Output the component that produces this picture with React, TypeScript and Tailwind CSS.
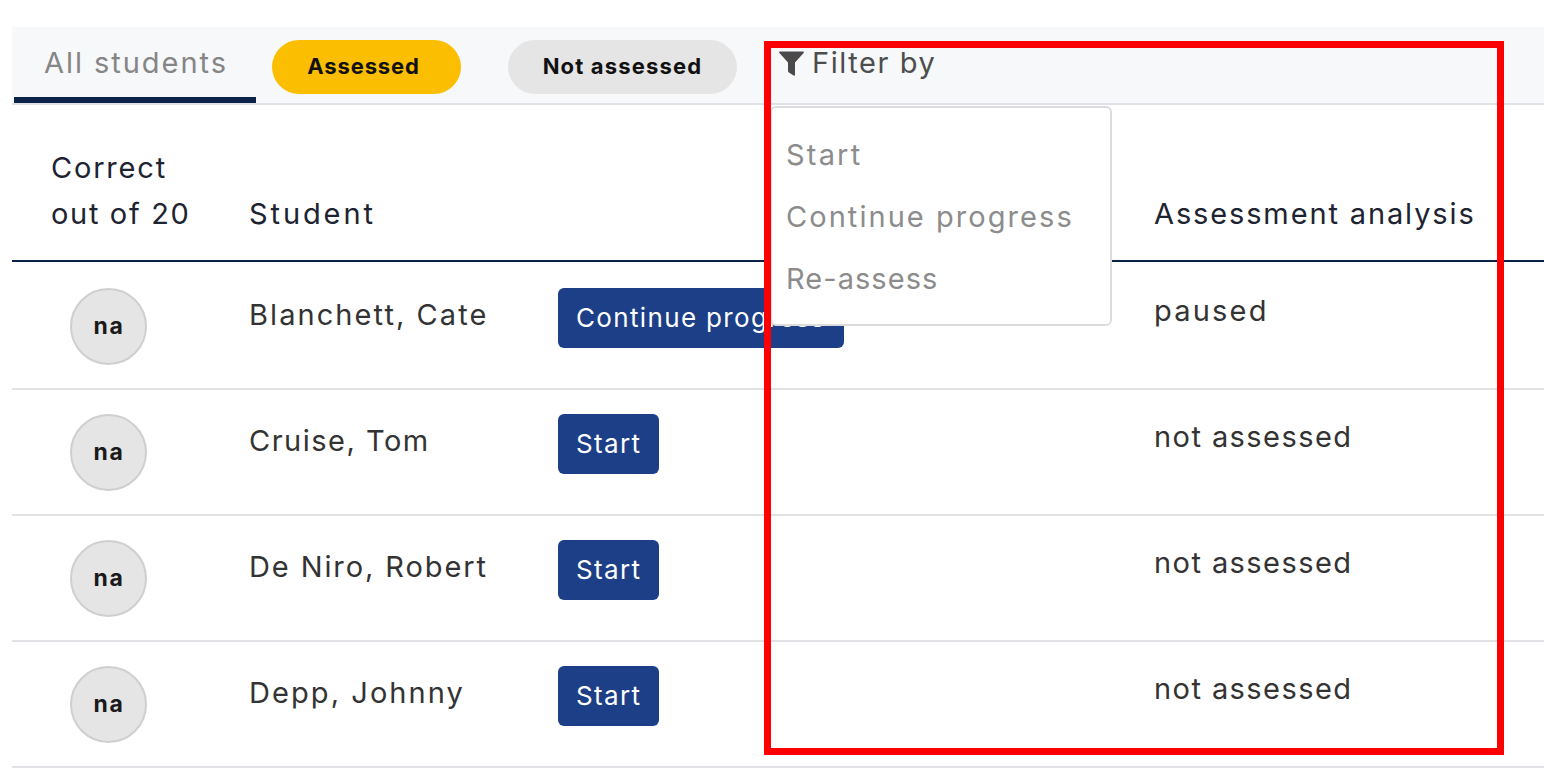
import React from "react";

const rows = [
  { name: "Blanchett, Cate", nameTrack: "tracking-[2.07px]", action: "Continue progress", status: "paused", statusTrack: "tracking-[2.2px]" },
  { name: "Cruise, Tom", nameTrack: "tracking-[1.5px]", action: "Start", status: "not assessed", statusTrack: "tracking-[1.43px]" },
  { name: "De Niro, Robert", nameTrack: "tracking-[1.9px]", action: "Start", status: "not assessed", statusTrack: "tracking-[1.43px]" },
  { name: "Depp, Johnny", nameTrack: "tracking-[2.07px]", action: "Start", status: "not assessed", statusTrack: "tracking-[1.43px]" },
];

function Funnel() {
  return (
    <svg width="25" height="25" viewBox="0 0 25 25" className="shrink-0">
      <path d="M0.6 0.5H24.4C24.9 0.5 25 1.5 24.6 2L16 11.6V24C16 24.8 15.2 25 14.6 24.6L9.9 21.4C9.3 21 9 20.5 9 20V11.6L0.4 2C0 1.5 0.1 0.5 0.6 0.5Z" fill="#4a4a4a" />
    </svg>
  );
}

export default function App() {
  return (
    <div className="relative h-[776px] overflow-hidden bg-white pl-3 pt-[27px] font-['Inter','Liberation_Sans',sans-serif] text-[#333]">
      <nav className="flex h-[78px] border-b-2 border-[#dfe2e8] bg-[#f7f8fa]">
        <div className="ml-[2px] h-[76px] w-[242px] border-b-[6px] border-[#0b2347] pl-[30px] pt-[16px] text-[29px] leading-[40px] tracking-[1.96px] text-[#858585]">
          All students
        </div>
        <button className="ml-4 mt-[13px] h-[54px] w-[189px] rounded-[27px] bg-[#fbbe00] pb-[2px] pr-[6px] text-[22px] font-bold tracking-[0.9px] text-[#111]">
          Assessed
        </button>
        <button className="ml-[47px] mt-[13px] h-[54px] w-[229px] rounded-[27px] bg-[#e5e5e5] pb-[2px] text-[22px] font-bold tracking-[1.17px] text-[#111]">
          Not assessed
        </button>
        <div className="relative ml-[42px] mt-[16px] h-[40px]">
          <div className="flex h-[40px] items-center gap-[8px]">
            <Funnel />
            <span className="text-[29px] tracking-[1.57px] text-[#4d4d4d]">Filter by</span>
          </div>
          <div className="absolute left-[-9px] top-[63px] z-10 flex h-[220px] w-[342px] flex-col rounded-[6px] border-2 border-[#dcdcdc] bg-white pl-[14px] pt-[16px] text-[29px] leading-[62px] text-[#8c8c8c]">
            <span className="tracking-[2.2px]">Start</span>
            <span className="tracking-[2.05px]">Continue progress</span>
            <span className="tracking-[1.05px]">Re-assess</span>
          </div>
        </div>
      </nav>

      <div className="mb-[2px] flex h-[157px] items-end border-b-2 border-[#0b2347] pb-[23px] text-[29px] leading-[46px] text-[#1d2330]">
        <div className="ml-[39px] w-[198px]">
          <div className="tracking-[1.8px]">Correct</div>
          <div className="tracking-[1.67px]">out of 20</div>
        </div>
        <div className="w-[905px] tracking-[2.9px]">Student</div>
        <div className="tracking-[1.87px]">Assessment analysis</div>
      </div>

      {rows.map((r) => (
        <div key={r.name} className="flex h-[126px] border-b-2 border-[#e0e2e6] pt-[24px] text-[29px] text-[#333]">
          <div className="ml-[58px] flex h-[77px] w-[77px] shrink-0 items-center justify-center rounded-full border-2 border-[#cfcfcf] bg-[#e5e5e5] pl-[1px] text-[23px] font-bold tracking-[1.6px] text-[#1a1a1a]">
            na
          </div>
          <div className={`ml-[102px] w-[309px] shrink-0 pt-[6px] leading-[42px] ${r.nameTrack}`}>{r.name}</div>
          <div className="w-[596px] shrink-0">
            <button className="h-[60px] rounded-[6px] bg-[#1c3f87] px-[18px] pb-[1px] text-[26px] tracking-[1.35px] text-white">
              {r.action}
            </button>
          </div>
          <div className={`pt-[2px] leading-[42px] ${r.statusTrack}`}>{r.status}</div>
        </div>
      ))}

      <div className="pointer-events-none absolute left-[764px] top-[41px] z-20 h-[714px] w-[740px] border-[7px] border-[#ff0000]" />
    </div>
  );
}
